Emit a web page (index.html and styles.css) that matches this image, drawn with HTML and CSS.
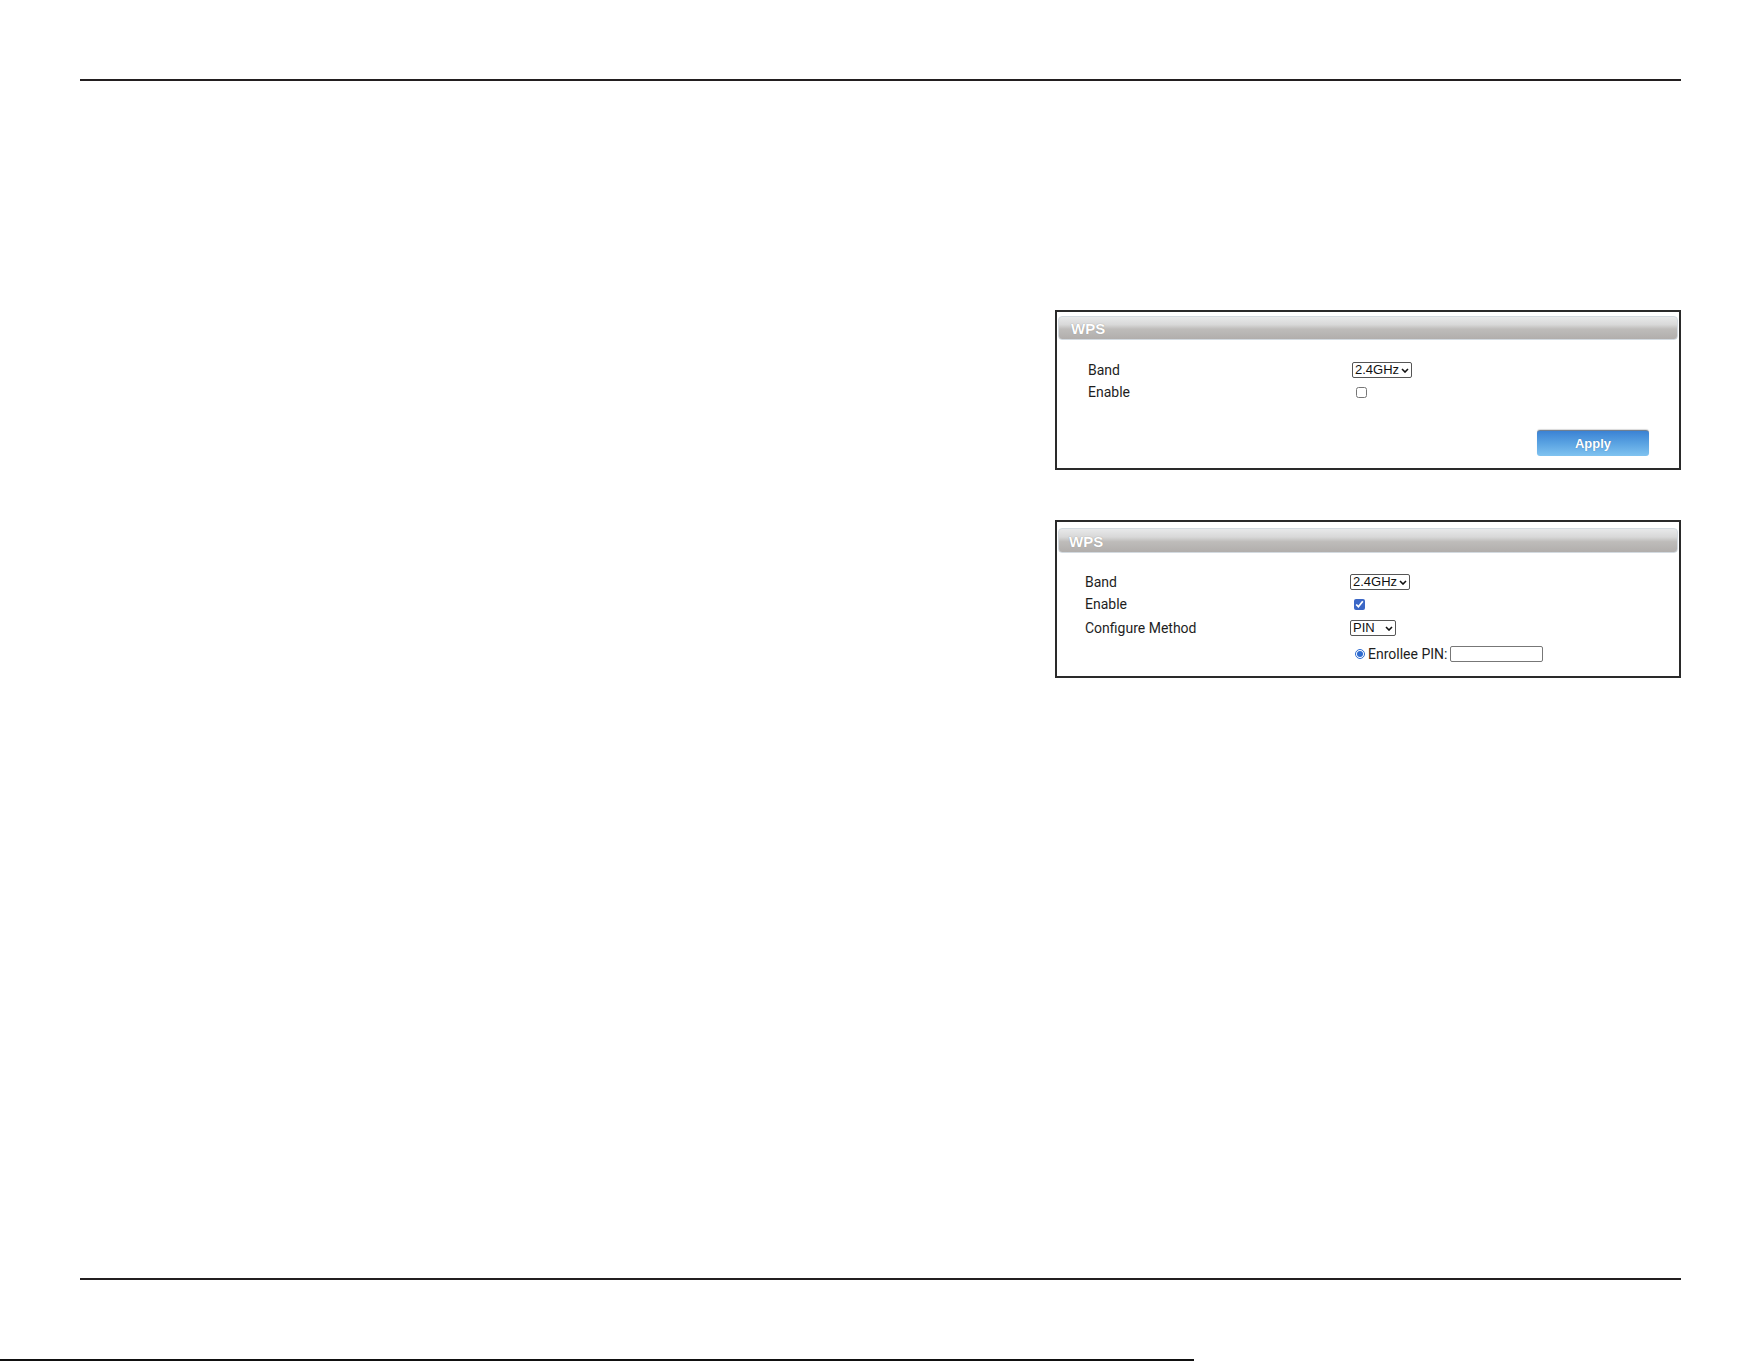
FILE: index.html
```html
<!DOCTYPE html>
<html lang="en">
<head>
    <meta charset="UTF-8">
    <meta name="viewport" content="width=device-width, initial-scale=1.0">
    <title>WPS</title>
    <link rel="stylesheet" href="styles.css">
</head>
<body>
    <div class="page">
        <div class="rule rule-top"></div>

        <div class="main">
            <!-- WPS disabled -->
            <div class="panel panel-a">
                <div class="panel-head">WPS</div>
                <div class="panel-body">
                    <div class="row">
                        <label for="band1">Band</label>
                        <span class="select-wrap">
                            <select id="band1" class="sel sel-band">
                                <option>2.4GHz</option>
                                <option>5GHz</option>
                            </select>
                            <svg class="chev" width="8" height="5" viewBox="0 0 8 5"><path d="M1 1 L4 4 L7 1" fill="none" stroke="#111" stroke-width="1.6"/></svg>
                        </span>
                    </div>
                    <div class="row">
                        <label for="en1">Enable</label>
                        <input type="checkbox" id="en1" class="chk">
                    </div>
                </div>
                <div class="panel-foot">
                    <button type="button" class="btn-apply">Apply</button>
                </div>
            </div>

            <!-- WPS enabled, PIN method -->
            <div class="panel panel-b">
                <div class="panel-head">WPS</div>
                <div class="panel-body">
                    <div class="row">
                        <label for="band2">Band</label>
                        <span class="select-wrap">
                            <select id="band2" class="sel sel-band">
                                <option>2.4GHz</option>
                                <option>5GHz</option>
                            </select>
                            <svg class="chev" width="8" height="5" viewBox="0 0 8 5"><path d="M1 1 L4 4 L7 1" fill="none" stroke="#111" stroke-width="1.6"/></svg>
                        </span>
                    </div>
                    <div class="row">
                        <label for="en2">Enable</label>
                        <input type="checkbox" id="en2" class="chk" checked>
                    </div>
                    <div class="row row-tall">
                        <label for="method">Configure Method</label>
                        <span class="select-wrap">
                            <select id="method" class="sel sel-pin">
                                <option>PIN</option>
                                <option>PBC</option>
                            </select>
                            <svg class="chev" width="8" height="5" viewBox="0 0 8 5"><path d="M1 1 L4 4 L7 1" fill="none" stroke="#111" stroke-width="1.6"/></svg>
                        </span>
                    </div>
                    <div class="row row-tall">
                        <span></span>
                        <div class="pin-field">
                            <input type="radio" name="pin" id="pin" class="radio" checked>
                            <label for="pin">Enrollee PIN:</label>
                            <input type="text" class="pin-input">
                        </div>
                    </div>
                </div>
            </div>
        </div>

        <div class="rule rule-bottom"></div>
        <div class="edge"></div>
    </div>
</body>
</html>
```

FILE: styles.css
```css
body {
    margin: 0;
    padding: 0;
    background: #ffffff;
    font-family: Roboto, 'Liberation Sans', Arial, sans-serif;
    color: #1e1e1e;
}
.page {
    height: 1361px;
    display: flex;
    flex-direction: column;
    overflow: hidden;
}
.rule {
    height: 2px;
    background-color: #231f20;
    margin: 0 80px;
}
.rule-top {
    margin-top: 79px;
}
.rule-bottom {
    margin-bottom: 79px;
}
.edge {
    height: 2px;
    width: 1194px;
    background-color: #111;
}
.main {
    flex: 1;
    display: flex;
    flex-direction: column;
    align-items: flex-end;
    padding-right: 80px;
}
.panel {
    width: 626px;
    box-sizing: border-box;
    border: 2px solid #2a2a2a;
    padding: 4px 1px 0;
}
.panel-a {
    margin-top: 229px;
    padding-bottom: 12px;
}
.panel-b {
    margin-top: 50px;
    padding-top: 6px;
    padding-bottom: 9px;
}
.panel-head {
    height: 24px;
    line-height: 24px;
    box-sizing: border-box;
    padding-left: 12px;
    border: 1px solid #d3dae0;
    border-radius: 4px;
    background: linear-gradient(#e8e9ea 0%, #d8d8d8 35%, #bebcba 55%, #b1aeac 100%);
    color: #ffffff;
    font-family: 'Liberation Sans', Arial, sans-serif;
    font-weight: bold;
    font-size: 15px;
    text-shadow: 0 0 1px #8a8886;
}
.panel-b .panel-head {
    height: 25px;
    line-height: 25px;
    padding-left: 10px;
}
.panel-body {
    padding: 19px 0 0 30px;
}
.panel-b .panel-body {
    padding: 18px 0 0 27px;
}
.row {
    display: grid;
    grid-template-columns: 264px 1fr;
    align-items: center;
    height: 22px;
    font-size: 14px;
}
.panel-b .row {
    grid-template-columns: 265px 1fr;
}
.row-tall {
    height: 26px;
}
.select-wrap {
    position: relative;
    justify-self: start;
    display: inline-flex;
}
.sel {
    appearance: none;
    -webkit-appearance: none;
    font-family: 'Liberation Sans', Arial, sans-serif;
    font-size: 13px;
    color: #111;
    height: 16px;
    line-height: 14px;
    padding: 0 0 0 2px;
    margin: 0;
    border: 1px solid #555;
    border-radius: 2px;
    background: #fff;
}
.sel-band {
    width: 60px;
}
.sel-pin {
    width: 46px;
}
.chev {
    position: absolute;
    right: 3px;
    top: 6px;
    pointer-events: none;
}
.chk {
    width: 11px;
    height: 11px;
    margin: 0 0 0 4px;
    accent-color: #3b67c6;
}
.pin-field {
    display: flex;
    align-items: center;
    gap: 3px;
    font-size: 14px;
}
.radio {
    width: 10px;
    height: 10px;
    margin: 0 0 0 5px;
    accent-color: #2d6bd0;
}
.pin-input {
    width: 93px;
    height: 16px;
    box-sizing: border-box;
    border: 1px solid #777;
    border-radius: 2px;
    margin: 0;
    padding: 0 3px;
}
.panel-foot {
    display: flex;
    justify-content: flex-end;
    padding: 27px 29px 0 0;
}
.btn-apply {
    width: 112px;
    height: 26px;
    border: none;
    border-top: 1px solid #6f7f92;
    border-radius: 3px;
    background: linear-gradient(#3b82d4 0%, #5aa3e2 50%, #80c3f0 100%);
    color: #ffffff;
    font-family: 'Liberation Sans', Arial, sans-serif;
    font-weight: bold;
    font-size: 13px;
    text-shadow: 0 0 1px #3a6fa8;
    cursor: pointer;
    box-shadow: 0 -1px 1px rgba(0, 0, 0, 0.15);
}
```
